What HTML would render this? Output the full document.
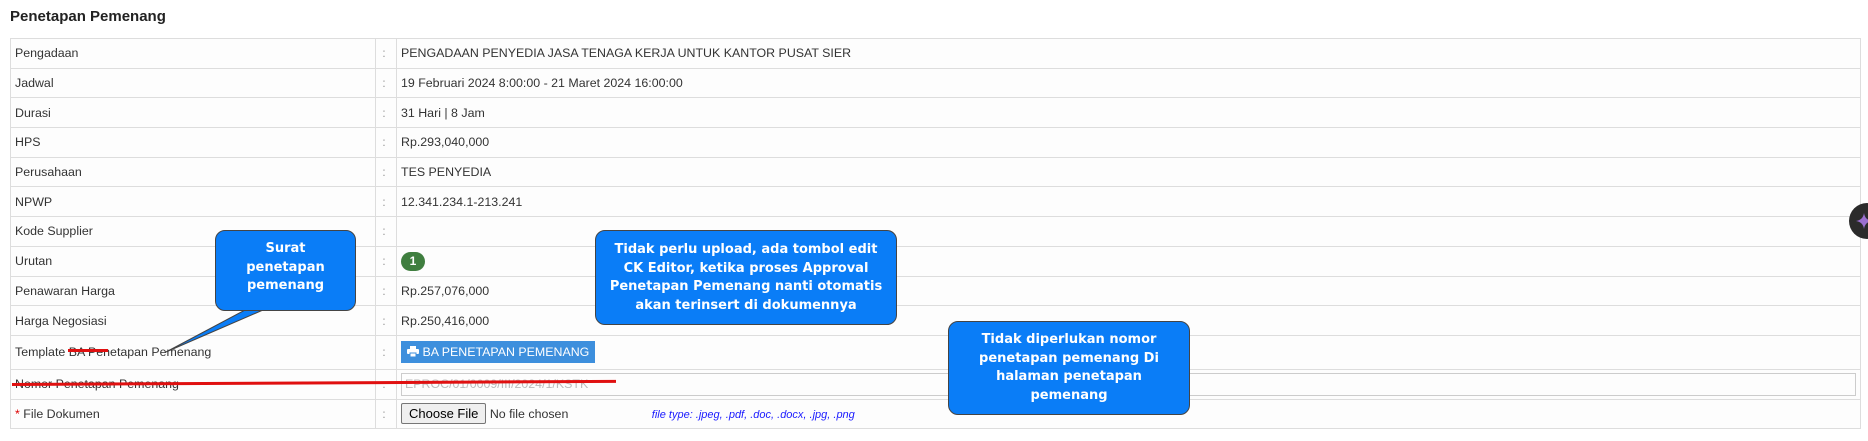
<!DOCTYPE html>
<html><head><meta charset="utf-8"><style>
body{margin:0;width:1868px;height:441px;background:#fff;font-family:"Liberation Sans",Arial,sans-serif;font-size:12.4px;color:#333;position:relative;overflow:hidden}
.title{position:absolute;left:10px;top:8px;font-weight:bold;font-size:15px;color:#222}
table{position:absolute;left:10px;top:38px;width:1851px;border-collapse:collapse;background:#fdfdfd}
td{border:1px solid #ddd;padding:0 4px;height:28.7px;vertical-align:middle;white-space:nowrap}
td.c{width:10px;color:#999;padding:0 4px 0 6px}
td.l{width:362px}
.btn{display:inline-block;background:#3d8fdd;color:#fff;padding:4px 6px;font-size:12.4px;height:14px;line-height:14px}
.badge{display:inline-block;background:#3f7e3f;color:#fff;font-weight:bold;border-radius:10px;width:24px;text-align:center;height:19px;line-height:19px;font-size:12px}
.inp{border:1px solid #ccc;height:21px;line-height:21px;color:#bbb;padding-left:3px;width:1450px}
.cf{display:inline-block;border:1px solid #767676;background:#efefef;border-radius:2px;padding:2px 7px;font-size:13px;color:#000}
.co{position:absolute;background:#0a7df7;border:1px solid #444;border-radius:10px;color:#fff;font-family:"DejaVu Sans",sans-serif;font-weight:bold;font-size:13px;text-align:center;line-height:18.5px;box-sizing:border-box}
.red{position:absolute;background:#e01010;height:3px}
</style></head><body>
<div class="title">Penetapan Pemenang</div>
<table>
<tr><td class="l">Pengadaan</td><td class="c">:</td><td>PENGADAAN PENYEDIA JASA TENAGA KERJA UNTUK KANTOR PUSAT SIER</td></tr>
<tr><td class="l">Jadwal</td><td class="c">:</td><td>19 Februari 2024 8:00:00 - 21 Maret 2024 16:00:00</td></tr>
<tr><td class="l">Durasi</td><td class="c">:</td><td>31 Hari | 8 Jam</td></tr>
<tr><td class="l">HPS</td><td class="c">:</td><td>Rp.293,040,000</td></tr>
<tr><td class="l">Perusahaan</td><td class="c">:</td><td>TES PENYEDIA</td></tr>
<tr><td class="l">NPWP</td><td class="c">:</td><td>12.341.234.1-213.241</td></tr>
<tr><td class="l">Kode Supplier</td><td class="c">:</td><td></td></tr>
<tr><td class="l">Urutan</td><td class="c">:</td><td><span class="badge">1</span></td></tr>
<tr><td class="l">Penawaran Harga</td><td class="c">:</td><td>Rp.257,076,000</td></tr>
<tr><td class="l">Harga Negosiasi</td><td class="c">:</td><td>Rp.250,416,000</td></tr>
<tr><td class="l" style="height:33px">Template BA Penetapan Pemenang</td><td class="c">:</td><td><span class="btn"><svg width="12" height="11" viewBox="0 0 12 11" style="vertical-align:-1px"><rect x="3" y="0" width="6" height="3" fill="#fff"/><rect x="0" y="3" width="12" height="5" rx="1" fill="#fff"/><rect x="3" y="7" width="6" height="4" fill="#fff" stroke="#3d8fdd" stroke-width="1"/></svg> BA PENETAPAN PEMENANG</span></td></tr>
<tr><td class="l">Nomor Penetapan Pemenang</td><td class="c">:</td><td><div class="inp">EPROC/01/0009/III/2024/1/KSTK</div></td></tr>
<tr><td class="l"><span style="color:#d00">*</span> File Dokumen</td><td class="c">:</td><td><span class="cf">Choose File</span> No file chosen <span style="margin-left:80px;color:#1a1aff;font-style:italic;font-size:11px">file type: .jpeg, .pdf, .doc, .docx, .jpg, .png</span></td></tr>
</table>
<div class="red" style="left:68px;top:349px;width:40px"></div>
<div class="red" style="left:12px;top:383px;width:604px;transform:rotate(-0.3deg);transform-origin:left"></div>
<svg style="position:absolute;left:160px;top:300px" width="110" height="60"><polygon points="85,10 103,10 6,52" fill="#0a7df7" stroke="#444" stroke-width="1"/></svg>
<div class="co" style="left:215px;top:230px;width:141px;height:81px;padding-top:9px">Surat<br>penetapan<br>pemenang</div>
<div class="co" style="left:595px;top:230px;width:302px;height:95px;padding-top:10px">Tidak perlu upload, ada tombol edit<br>CK Editor, ketika proses Approval<br>Penetapan Pemenang nanti otomatis<br>akan terinsert di dokumennya</div>
<div class="co" style="left:948px;top:321px;width:242px;height:94px;padding-top:9px">Tidak diperlukan nomor<br>penetapan pemenang Di<br>halaman penetapan<br>pemenang</div>
<div style="position:absolute;left:1849px;top:203px;width:36px;height:36px;border-radius:50%;background:#2b2b2b"></div>
<svg style="position:absolute;left:1856px;top:213px" width="16" height="16" viewBox="0 0 16 16"><path d="M8 0 Q9 7 16 8 Q9 9 8 16 Q7 9 0 8 Q7 7 8 0Z" fill="#9b6fd0"/></svg>
</body></html>
